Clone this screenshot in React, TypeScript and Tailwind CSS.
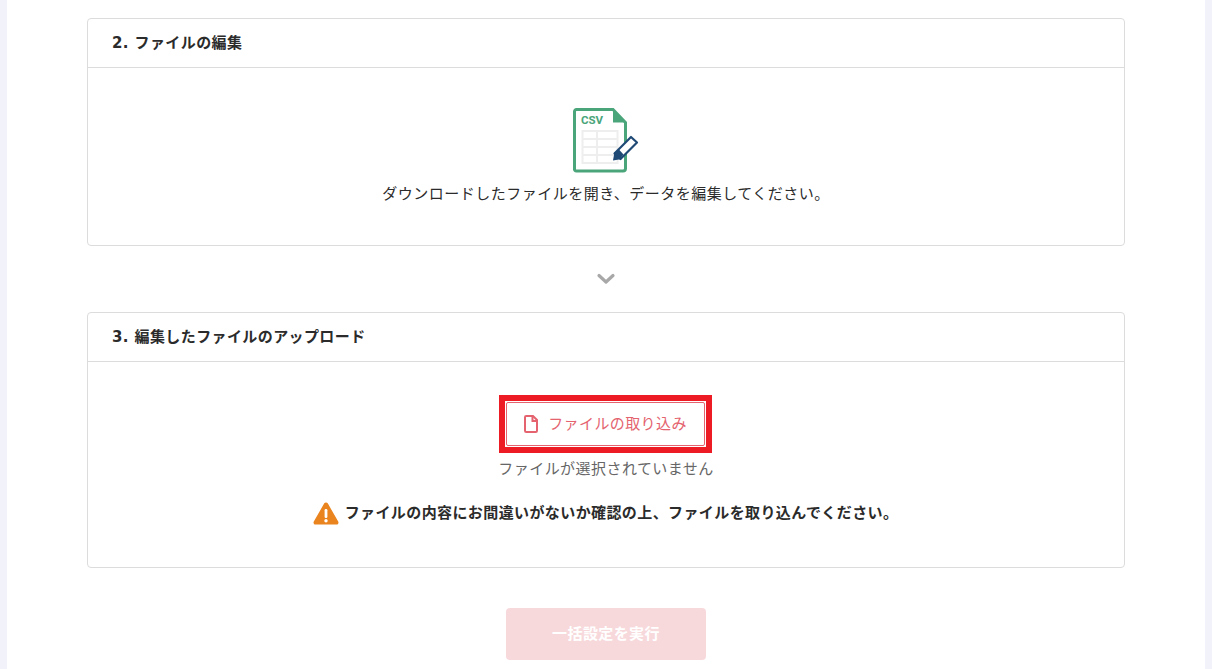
import React from "react";

const font = { fontFamily: '"DejaVu Sans", "Noto Sans CJK JP", sans-serif' };

function CsvIcon() {
  return (
    <svg width="66" height="66" viewBox="0 0 66 66" fill="none">
      <path d="M3.5 1.5H40L52.5 14.5V60.5a2.5 2.5 0 0 1-2.5 2.5H3.5A2 2 0 0 1 1.5 60.5V3.5a2 2 0 0 1 2-2Z" fill="#fff" stroke="#4aa57a" strokeWidth="3" />
      <path d="M40 1 53.5 14.5H40Z" fill="#4aa57a" />
      <rect x="9.5" y="23" width="35" height="32" fill="none" stroke="#eeeeee" strokeWidth="2" />
      <path d="M9.5 31h35M9.5 39h35M9.5 47h35M24 23v32" stroke="#eeeeee" strokeWidth="2" />
      <text x="8" y="16" fontSize="11.5" fontWeight="700" fill="#4aa57a" fontFamily="Roboto, sans-serif">CSV</text>
      <path d="M41.5 45.5 58 29 64 34.5 47.5 51Z" fill="#fff" stroke="#1f4a75" strokeWidth="2.2" strokeLinejoin="round" />
      <path d="M40 52.5 41.5 44 49 51Z" fill="#1f4a75" />
      <path d="M41.5 45 45.5 41 50.5 46.5 47 51Z" fill="#1f4a75" />
    </svg>
  );
}

function Card({ title, className, children }: { title: string; className: string; children: React.ReactNode }) {
  return (
    <section className={`border border-[#dcdcdc] rounded bg-white ${className}`}>
      <h2 className="h-[49px] flex items-center px-6 border-b border-[#dcdcdc] text-[15px] font-bold tracking-[0.4px] text-[#2b2b2b]">{title}</h2>
      {children}
    </section>
  );
}

export default function App() {
  return (
    <div style={font} className="h-[669px] overflow-hidden bg-[#f1f2fa] px-[7px]">
      <main className="h-full bg-white px-20 pt-[18px]">
        <Card title="2. ファイルの編集" className="h-[228px]">
          <div className="flex flex-col items-center pt-10">
            <div className="h-[65px]"><CsvIcon /></div>
            <p className="mt-[9px] text-[15px] leading-[24px] tracking-[0.5px] text-[#2b2b2b]">ダウンロードしたファイルを開き、データを編集してください。</p>
          </div>
        </Card>
        <div className="h-[66px] flex items-center justify-center">
          <svg width="20" height="12" viewBox="0 0 20 12" fill="none"><path d="M3 2.5 10 9l7-6.5" stroke="#a8a8a8" strokeWidth="3.2" strokeLinecap="round" strokeLinejoin="round" /></svg>
        </div>
        <Card title="3. 編集したファイルのアップロード" className="h-[256px]">
          <div className="flex flex-col items-center pt-[33px]">
            <div className="border-[6px] border-[#ed1c24] p-px w-[213px] h-[58px] mr-px">
              <button className="w-full h-full border border-[#e4636f] rounded-[2px] flex items-center justify-center gap-[10px] text-[15px] tracking-[0.4px] text-[#e4636f]">
                <svg width="14" height="18" viewBox="0 0 14 18" fill="none"><path d="M1 2.2A1.2 1.2 0 0 1 2.2 1H9l4 4v10.8a1.2 1.2 0 0 1-1.2 1.2H2.2A1.2 1.2 0 0 1 1 15.8Z" stroke="#e4636f" strokeWidth="2" /><path d="M8.5 1v5H13" stroke="#e4636f" strokeWidth="2" /></svg>
                ファイルの取り込み
              </button>
            </div>
            <p className="mt-[4px] text-[15px] leading-[24px] tracking-[0.45px] text-[#666666]">ファイルが選択されていません</p>
            <div className="mt-[20px] flex items-center gap-[6px] pr-[1px]">
              <svg width="26" height="24" viewBox="0 0 26 24"><path d="M13 1.5a2.2 2.2 0 0 1 1.9 1.1l10.3 18a2 2 0 0 1-1.8 3H2.6a2 2 0 0 1-1.8-3l10.3-18A2.2 2.2 0 0 1 13 1.5Z" fill="#ea841f" /><rect x="11.6" y="8" width="2.8" height="9" rx="1.2" fill="#fff" /><circle cx="13" cy="19.7" r="1.7" fill="#fff" /></svg>
              <p className="text-[15px] font-bold tracking-[0.4px] text-[#2b2b2b]">ファイルの内容にお間違いがないか確認の上、ファイルを取り込んでください。</p>
            </div>
          </div>
        </Card>
        <div className="flex justify-center pt-10">
          <button className="w-[200px] h-[52px] rounded bg-[#f7d9dc] text-white text-[15px] font-bold tracking-[0.4px]">一括設定を実行</button>
        </div>
      </main>
    </div>
  );
}
